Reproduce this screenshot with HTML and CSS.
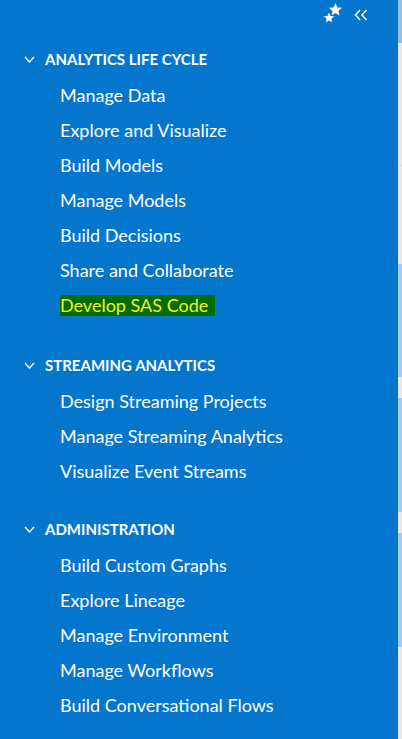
FILE: index.html
```html
<!DOCTYPE html>
<html>
<head>
<meta charset="utf-8">
<link rel="stylesheet" href="styles.css">
</head>
<body>
<div class="page">
  <nav class="nav">
    <div class="topbar">
      <svg class="stars" width="24" height="24" viewBox="0 0 24 24">
        <polygon points="15.5,0 17.32,4.49 22.16,4.84 18.45,7.96 19.62,12.66 15.5,10.1 11.38,12.66 12.55,7.96 8.84,4.84 13.68,4.49" fill="#fff"/>
        <polygon points="9,7.5 10.95,12.3 16.1,12.7 12.15,16 13.4,21 9,18.3 4.6,21 5.85,16 1.9,12.7 7.05,12.3" fill="#fff" stroke="#0576ce" stroke-width="1.5" stroke-linejoin="round"/>
      </svg>
      <svg class="collapse" width="14" height="12" viewBox="0 0 14 12">
        <polyline points="6,1 1.5,6 6,11" fill="none" stroke="#fff" stroke-width="1.5"/>
        <polyline points="12.5,1 8,6 12.5,11" fill="none" stroke="#fff" stroke-width="1.5"/>
      </svg>
    </div>

    <section class="group g1">
      <div class="heading">
        <svg class="chev" width="11" height="7" viewBox="0 0 11 7"><polyline points="1,1 5.5,6 10,1" fill="none" stroke="#fff" stroke-width="1.4"/></svg>
        <span>ANALYTICS LIFE CYCLE</span>
      </div>
      <ul class="items">
        <li>Manage Data</li>
        <li>Explore and Visualize</li>
        <li>Build Models</li>
        <li>Manage Models</li>
        <li>Build Decisions</li>
        <li>Share and Collaborate</li>
        <li><span class="hl">Develop SAS Code</span></li>
      </ul>
    </section>

    <section class="group g2">
      <div class="heading">
        <svg class="chev" width="11" height="7" viewBox="0 0 11 7"><polyline points="1,1 5.5,6 10,1" fill="none" stroke="#fff" stroke-width="1.4"/></svg>
        <span>STREAMING ANALYTICS</span>
      </div>
      <ul class="items">
        <li>Design Streaming Projects</li>
        <li>Manage Streaming Analytics</li>
        <li>Visualize Event Streams</li>
      </ul>
    </section>

    <section class="group g3">
      <div class="heading">
        <svg class="chev" width="11" height="7" viewBox="0 0 11 7"><polyline points="1,1 5.5,6 10,1" fill="none" stroke="#fff" stroke-width="1.4"/></svg>
        <span>ADMINISTRATION</span>
      </div>
      <ul class="items">
        <li>Build Custom Graphs</li>
        <li>Explore Lineage</li>
        <li>Manage Environment</li>
        <li>Manage Workflows</li>
        <li>Build Conversational Flows</li>
      </ul>
    </section>
  </nav>
  <div class="strip">
    <div class="s-blue s1"></div>
    <div class="s-gray s2"></div>
    <div class="s-gray s3"></div>
    <div class="s-blue s4"></div>
    <div class="s-gray s5"></div>
    <div class="s-blue s6"></div>
    <div class="s-gray s7"></div>
    <div class="s-blue s8"></div>
    <div class="s-gray s9"></div>
  </div>
</div>
</body>
</html>
```
FILE: styles.css
```css
html, body {
  margin: 0;
  padding: 0;
  height: 100%;
  background: #0576ce;
  overflow: hidden;
}
.page {
  display: flex;
  height: 739px;
}
.nav {
  width: 398px;
  background: #0576ce;
  color: #fff;
  font-family: Lato, "Open Sans", sans-serif;
}
.topbar {
  height: 30px;
  display: flex;
  justify-content: flex-end;
  align-items: center;
  gap: 10px;
  padding-right: 30px;
}
.collapse { margin-top: -1px; }
.g1 { margin-top: 17px; }
.g2 { margin-top: 30px; }
.g3 { margin-top: 28px; }
.heading {
  height: 24px;
  display: flex;
  align-items: center;
  padding-left: 24px;
  font-weight: 700;
  font-size: 15px;
}
.chev {
  margin-right: 10px;
}
.items {
  list-style: none;
  margin: 7px 0 0 0;
  padding: 0 0 0 60px;
}
.items li {
  height: 35px;
  line-height: 35px;
  font-size: 18px;
}
.hl {
  display: inline-block;
  background: #036d00;
  color: #f2f32a;
  line-height: 21px;
  padding-right: 7px;
}
.strip {
  width: 4px;
  display: flex;
  flex-direction: column;
}
.s-blue { background: #a6cbee; }
.s-gray { background: #e8e8e8; }
.s1 { height: 43px; background: #98bfe2; }
.s2 { height: 122px; border-bottom: 1px solid #d6d6d6; }
.s3 { height: 98px; }
.s4 { height: 113px; }
.s5 { height: 21px; }
.s6 { height: 114px; }
.s7 { height: 21px; }
.s8 { height: 114px; }
.s9 { flex: 1; }
```
